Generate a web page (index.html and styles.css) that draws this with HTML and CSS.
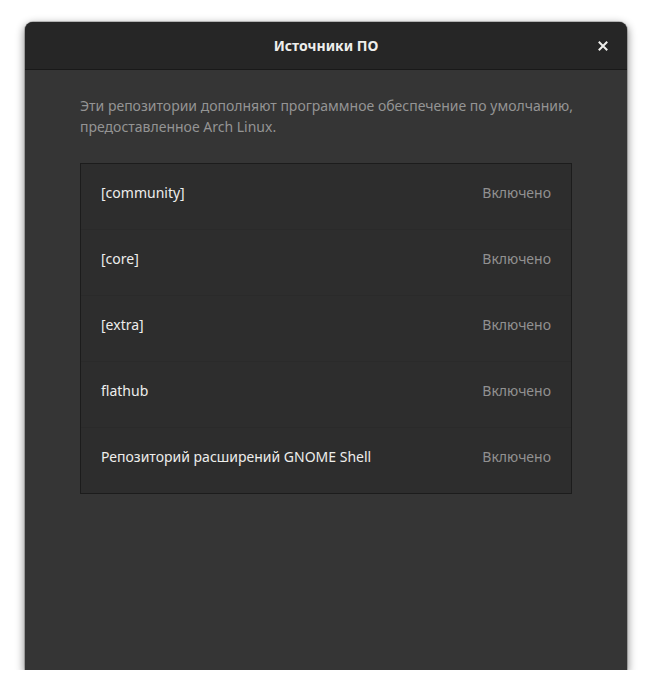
FILE: index.html
```html
<!DOCTYPE html>
<html lang="ru">
  <head>
    <meta charset="UTF-8" />
    <meta name="viewport" content="width=device-width, initial-scale=1.0" />
    <title>Источники ПО</title>
    <link rel="stylesheet" href="styles.css">
  </head>
  <body>
    <div class="dialog">
      <header class="headerbar">
        <span class="title">Источники ПО</span>
        <button class="close-button" aria-label="Закрыть">
          <svg width="10" height="10" viewBox="0 0 10 10">
            <path d="M1.5 1.5 L8.5 8.5 M8.5 1.5 L1.5 8.5" stroke="#eeeeec" stroke-width="2" stroke-linecap="square" />
          </svg>
        </button>
      </header>
      <main class="content">
        <p class="description">
          Эти репозитории дополняют программное обеспечение по умолчанию,<br>
          предоставленное Arch Linux.
        </p>
        <ul class="repo-list">
          <li class="repo-row"><span class="repo-name">[community]</span><span class="repo-state">Включено</span></li>
          <li class="repo-row"><span class="repo-name">[core]</span><span class="repo-state">Включено</span></li>
          <li class="repo-row"><span class="repo-name">[extra]</span><span class="repo-state">Включено</span></li>
          <li class="repo-row"><span class="repo-name">flathub</span><span class="repo-state">Включено</span></li>
          <li class="repo-row"><span class="repo-name">Репозиторий расширений GNOME Shell</span><span class="repo-state">Включено</span></li>
        </ul>
      </main>
    </div>
  </body>
</html>
```

FILE: styles.css
```css
* {
  box-sizing: border-box;
  margin: 0;
  padding: 0;
}

body {
  background-color: #ffffff;
  font-family: "Noto Sans", "Open Sans", sans-serif;
  font-size: 14px;
  color: #eeeeec;
}

.dialog {
  margin: 22px 0 0 25px;
  width: 602px;
  height: 648px;
  background-color: #353535;
  border-radius: 8px 8px 0 0;
  overflow: hidden;
  box-shadow: 0 3px 9px 1px rgba(0, 0, 0, 0.45), 0 0 0 1px rgba(0, 0, 0, 0.2);
  display: flex;
  flex-direction: column;
}

.headerbar {
  position: relative;
  height: 48px;
  flex: none;
  display: flex;
  align-items: center;
  justify-content: center;
  background-color: #262626;
  border-bottom: 1px solid #191919;
}

.title {
  font-weight: bold;
  font-size: 14px;
  color: #eeeeec;
}

.close-button {
  position: absolute;
  right: 14px;
  top: 14px;
  width: 20px;
  height: 20px;
  border: none;
  background: transparent;
  display: flex;
  align-items: center;
  justify-content: center;
}

.content {
  padding: 25px 40px 0 55px;
}

.description {
  color: #949494;
  line-height: 21px;
  white-space: nowrap;
}

.repo-list {
  list-style: none;
  margin: 26px 15px 0 0;
  background-color: #2d2d2d;
  border: 1px solid #1c1c1c;
}

.repo-row {
  height: 66px;
  display: flex;
  align-items: center;
  justify-content: space-between;
  padding: 0 20px 8px 20px;
  border-bottom: 1px solid #2a2a2a;
}

.repo-row:last-child {
  height: 65px;
  border-bottom: none;
}

.repo-state {
  color: #919191;
}
```
